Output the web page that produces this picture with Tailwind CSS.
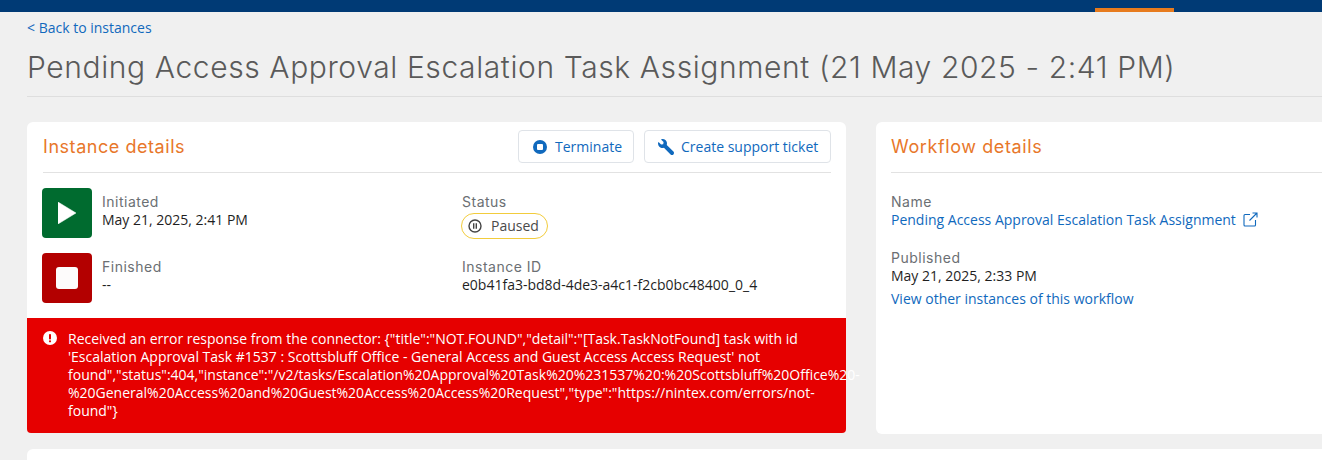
<!DOCTYPE html>
<html>
<head>
<meta charset="utf-8">
<script src="https://cdn.jsdelivr.net/npm/@tailwindcss/browser@4"></script>
</head>
<body class="bg-[#f0f0f0] overflow-hidden font-['Open_Sans',sans-serif] text-[14px] leading-[18px] text-[#1f1f1f]">
<div class="h-[460px] w-[1322px] overflow-hidden">
  <header class="h-[12px] bg-[#003a75] flex justify-end items-end pr-[148px]">
    <div class="w-[79px] h-[4px] bg-[#e77b1e]"></div>
  </header>
  <main class="pl-[27px]">
    <a class="block mt-[7px] h-[18px] text-[#1069bd]">&lt; Back to instances</a>
    <h1 class="mt-[10px] h-[49px] leading-[40px] text-[30px] text-[#5a5a5a] whitespace-nowrap font-['Inter',sans-serif] font-light tracking-[0.6px]">Pending Access Approval Escalation Task Assignment (21 May 2025 - 2:41 PM)</h1>
    <div class="border-t border-[#dedede] mb-[25px] ml-0"></div>
    <div class="flex gap-[30px] w-[1700px]">
      <section class="w-[819px] h-[311px] bg-white rounded-[6px] flex flex-col relative">
        <div class="mx-[16px] mr-[15px] h-[51px] border-b border-[#e2e2e2] flex items-start justify-between pt-[8px]">
          <h2 class="text-[18px] leading-[33px] text-[#e8772a] font-['Inter',sans-serif] font-normal tracking-[0.55px]">Instance details</h2>
          <div class="flex gap-[10px]">
            <button class="h-[33px] w-[116px] rounded-[4px] border border-[#dfe3e8] text-[#1069bd] flex items-center pl-[14px] gap-[8px]">
              <svg width="14" height="14" viewBox="0 0 14 14"><circle cx="7" cy="7" r="7" fill="#1069bd"/><rect x="4" y="4" width="6" height="6" rx="1" fill="#fff"/></svg>
              Terminate
            </button>
            <button class="h-[33px] w-[187px] rounded-[4px] border border-[#dfe3e8] text-[#1069bd] flex items-center pl-[13px] gap-[7px]">
              <svg width="16" height="16" viewBox="0 0 512 512"><g transform="translate(512 0) scale(-1 1)"><path fill="#1069bd" d="M507.7 109.100c-2.200-9-13.500-12.100-20.100-5.500l-74.400 74.400-67.900-11.300-11.300-67.900 74.400-74.400c6.600-6.600 3.400-17.900-5.700-20.200-47.400-11.700-99.600 .9-136.600 37.900-39.600 39.600-50.600 97.100-34.100 147.200L18.700 402.800c-25 25-25 65.500 0 90.500s65.500 25 90.500 0l213.200-213.200c50.100 16.700 107.500 5.700 147.400-34.200 37.100-37.100 49.700-89.300 37.900-136.800z"/></g></svg>
              Create support ticket
            </button>
          </div>
        </div>
        <div class="grid grid-cols-[420px_1fr] pl-[15px] pt-[15px]">
          <div class="flex flex-col gap-[15px]">
            <div class="flex gap-[10px] h-[50px]">
              <div class="w-[50px] h-[50px] rounded-[4px] bg-[#006b2f] flex items-center justify-center">
                <svg width="18" height="22" viewBox="0 0 18 22"><path d="M0 0 L18 11 L0 22 Z" fill="#fff" stroke="#fff" stroke-width="0.5" stroke-linejoin="round"/></svg>
              </div>
              <div class="pt-[5px]">
                <div class="text-[#6b6f73] font-['Inter',sans-serif] font-normal text-[14px] leading-[18px] tracking-[0.5px]">Initiated</div>
                <div class="">May 21, 2025, 2:41 PM</div>
              </div>
            </div>
            <div class="flex gap-[10px] h-[50px]">
              <div class="w-[50px] h-[50px] rounded-[4px] bg-[#b30000] flex items-center justify-center">
                <div class="w-[22px] h-[22px] rounded-[3px] bg-[#fdfbfb]"></div>
              </div>
              <div class="pt-[5px]">
                <div class="text-[#6b6f73] font-['Inter',sans-serif] font-normal text-[14px] leading-[18px] tracking-[0.5px]">Finished</div>
                <div class="">--</div>
              </div>
            </div>
          </div>
          <div class="flex flex-col">
            <div class="h-[65px] pt-[5px]">
              <div class="text-[#6b6f73] font-['Inter',sans-serif] font-normal leading-[18px] tracking-[0.5px]">Status</div>
              <div class="mt-[2px] -ml-px w-[87px] h-[26px] rounded-full border border-[#f2cc3c] flex items-center pl-[6px] gap-[9px] text-[#4a4a4a]">
                <svg width="14" height="14" viewBox="0 0 14 14" fill="none" stroke="#444" stroke-width="1.400"><circle cx="7" cy="7" r="6"/><path d="M5.700 4.300v5.400M8.300 4.300v5.400"/></svg>
                Paused
              </div>
            </div>
            <div class="pt-[5px]">
              <div class="text-[#6b6f73] font-['Inter',sans-serif] font-normal leading-[18px] tracking-[0.5px]">Instance ID</div>
              <div>e0b41fa3-bd8d-4de3-a4c1-f2cb0bc48400_0_4</div>
            </div>
          </div>
        </div>
        <div class="absolute left-0 right-0 top-[196px] h-[115px] bg-[#e60000] rounded-b-[4px] flex text-white pl-[16px] pt-[12px]">
          <svg class="mt-[1px] shrink-0" width="14" height="14" viewBox="0 0 14 14"><circle cx="7" cy="7" r="7" fill="#fff"/><rect x="6" y="3" width="2" height="5.500" rx="0.800" fill="#e60000"/><circle cx="7" cy="10.300" r="1.100" fill="#e60000"/></svg>
          <p class="ml-[11px] w-[763px]">Received an error response from the connector: {"title":"NOT.FOUND","detail":"[Task.TaskNotFound] task with id 'Escalation Approval Task #1537 : Scottsbluff Office - General Access and Guest Access Access Request' not found","status":404,"instance":"/v2/tasks/Escalation%20Approval%20Task%20%231537%20:%20Scottsbluff%20Office%20-%20General%20Access%20and%20Guest%20Access%20Access%20Request","type":"https://nintex.com/errors/not-found"}</p>
        </div>
      </section>
      <section class="w-[819px] h-[312px] bg-white rounded-[6px] pl-[15px]">
        <div class="h-[51px] border-b border-[#e2e2e2] pt-[8px]">
          <h2 class="text-[18px] leading-[33px] text-[#e8772a] font-['Inter',sans-serif] font-normal tracking-[0.6px]">Workflow details</h2>
        </div>
        <div class="pt-[20px]">
          <div class="text-[#6b6f73] font-['Inter',sans-serif] font-normal leading-[18px] tracking-[0.5px]">Name</div>
          <a class="flex items-center gap-[7px] text-[#1069bd]">Pending Access Approval Escalation Task Assignment
            <svg class="-mt-[2px]" width="15" height="15" viewBox="0 0 15 15" fill="none" stroke="#1069bd" stroke-width="1.100"><path d="M7 2.500H2a1 1 0 0 0-1 1V13a1 1 0 0 0 1 1h9.500a1 1 0 0 0 1-1V8"/><path d="M6.500 8.500 14 1M9.500 1H14v4.500"/></svg>
          </a>
          <div class="mt-[20px] text-[#6b6f73] font-['Inter',sans-serif] font-normal leading-[18px] tracking-[0.5px]">Published</div>
          <div>May 21, 2025, 2:33 PM</div>
          <a class="block mt-[5px] text-[#1069bd]">View other instances of this workflow</a>
        </div>
      </section>
    </div>
    <div class="mt-[15px] w-[1400px] h-[40px] bg-white rounded-[6px]"></div>
  </main>
</div>
</body>
</html>
